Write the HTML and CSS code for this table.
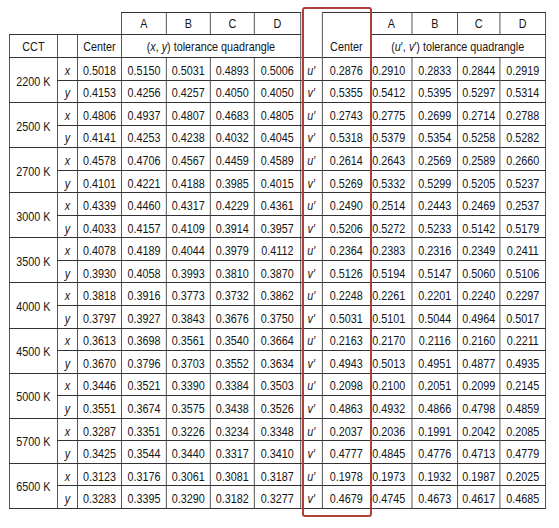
FILE: index.html
```html
<!DOCTYPE html>
<html>
<head>
<meta charset="utf-8">
<link rel="stylesheet" href="styles.css">
</head>
<body>
<div class="page">
<table class="grid">
<colgroup>
<col class="c-cct"><col class="c-lab"><col class="c-ctr"><col class="c-a"><col class="c-b"><col class="c-c"><col class="c-d">
<col class="c-ulab"><col class="c-uctr"><col class="c-ua"><col class="c-ub"><col class="c-uc"><col class="c-ud">
</colgroup>
<tr class="h1"><td class="blank" colspan="3"></td><th>A</th><th>B</th><th>C</th><th>D</th><td class="uhead" rowspan="2"></td><td class="chead" rowspan="2">Center</td><th>A</th><th>B</th><th>C</th><th>D</th></tr>
<tr class="h2"><th>CCT</th><th></th><th>Center</th><th colspan="4">(<i>x</i>, <i>y</i>) tolerance quadrangle</th><th colspan="4">(<i>u</i>′, <i>v</i>′) tolerance quadrangle</th></tr>

<tr class="d r1"><td class="cct" rowspan="2">2200 K</td><td class="lab">x</td><td>0.5018</td><td>0.5150</td><td>0.5031</td><td>0.4893</td><td>0.5006</td><td class="lab">u′</td><td>0.2876</td><td>0.2910</td><td>0.2833</td><td>0.2844</td><td>0.2919</td></tr>
<tr class="d r2"><td class="lab">y</td><td>0.4153</td><td>0.4256</td><td>0.4257</td><td>0.4050</td><td>0.4050</td><td class="lab">v′</td><td>0.5355</td><td>0.5412</td><td>0.5395</td><td>0.5297</td><td>0.5314</td></tr>

<tr class="d r1"><td class="cct" rowspan="2">2500 K</td><td class="lab">x</td><td>0.4806</td><td>0.4937</td><td>0.4807</td><td>0.4683</td><td>0.4805</td><td class="lab">u′</td><td>0.2743</td><td>0.2775</td><td>0.2699</td><td>0.2714</td><td>0.2788</td></tr>
<tr class="d r2"><td class="lab">y</td><td>0.4141</td><td>0.4253</td><td>0.4238</td><td>0.4032</td><td>0.4045</td><td class="lab">v′</td><td>0.5318</td><td>0.5379</td><td>0.5354</td><td>0.5258</td><td>0.5282</td></tr>

<tr class="d r1"><td class="cct" rowspan="2">2700 K</td><td class="lab">x</td><td>0.4578</td><td>0.4706</td><td>0.4567</td><td>0.4459</td><td>0.4589</td><td class="lab">u′</td><td>0.2614</td><td>0.2643</td><td>0.2569</td><td>0.2589</td><td>0.2660</td></tr>
<tr class="d r2"><td class="lab">y</td><td>0.4101</td><td>0.4221</td><td>0.4188</td><td>0.3985</td><td>0.4015</td><td class="lab">v′</td><td>0.5269</td><td>0.5332</td><td>0.5299</td><td>0.5205</td><td>0.5237</td></tr>

<tr class="d r1"><td class="cct" rowspan="2">3000 K</td><td class="lab">x</td><td>0.4339</td><td>0.4460</td><td>0.4317</td><td>0.4229</td><td>0.4361</td><td class="lab">u′</td><td>0.2490</td><td>0.2514</td><td>0.2443</td><td>0.2469</td><td>0.2537</td></tr>
<tr class="d r2"><td class="lab">y</td><td>0.4033</td><td>0.4157</td><td>0.4109</td><td>0.3914</td><td>0.3957</td><td class="lab">v′</td><td>0.5206</td><td>0.5272</td><td>0.5233</td><td>0.5142</td><td>0.5179</td></tr>

<tr class="d r1"><td class="cct" rowspan="2">3500 K</td><td class="lab">x</td><td>0.4078</td><td>0.4189</td><td>0.4044</td><td>0.3979</td><td>0.4112</td><td class="lab">u′</td><td>0.2364</td><td>0.2383</td><td>0.2316</td><td>0.2349</td><td>0.2411</td></tr>
<tr class="d r2"><td class="lab">y</td><td>0.3930</td><td>0.4058</td><td>0.3993</td><td>0.3810</td><td>0.3870</td><td class="lab">v′</td><td>0.5126</td><td>0.5194</td><td>0.5147</td><td>0.5060</td><td>0.5106</td></tr>

<tr class="d r1"><td class="cct" rowspan="2">4000 K</td><td class="lab">x</td><td>0.3818</td><td>0.3916</td><td>0.3773</td><td>0.3732</td><td>0.3862</td><td class="lab">u′</td><td>0.2248</td><td>0.2261</td><td>0.2201</td><td>0.2240</td><td>0.2297</td></tr>
<tr class="d r2"><td class="lab">y</td><td>0.3797</td><td>0.3927</td><td>0.3843</td><td>0.3676</td><td>0.3750</td><td class="lab">v′</td><td>0.5031</td><td>0.5101</td><td>0.5044</td><td>0.4964</td><td>0.5017</td></tr>

<tr class="d r1"><td class="cct" rowspan="2">4500 K</td><td class="lab">x</td><td>0.3613</td><td>0.3698</td><td>0.3561</td><td>0.3540</td><td>0.3664</td><td class="lab">u′</td><td>0.2163</td><td>0.2170</td><td>0.2116</td><td>0.2160</td><td>0.2211</td></tr>
<tr class="d r2"><td class="lab">y</td><td>0.3670</td><td>0.3796</td><td>0.3703</td><td>0.3552</td><td>0.3634</td><td class="lab">v′</td><td>0.4943</td><td>0.5013</td><td>0.4951</td><td>0.4877</td><td>0.4935</td></tr>

<tr class="d r1"><td class="cct" rowspan="2">5000 K</td><td class="lab">x</td><td>0.3446</td><td>0.3521</td><td>0.3390</td><td>0.3384</td><td>0.3503</td><td class="lab">u′</td><td>0.2098</td><td>0.2100</td><td>0.2051</td><td>0.2099</td><td>0.2145</td></tr>
<tr class="d r2"><td class="lab">y</td><td>0.3551</td><td>0.3674</td><td>0.3575</td><td>0.3438</td><td>0.3526</td><td class="lab">v′</td><td>0.4863</td><td>0.4932</td><td>0.4866</td><td>0.4798</td><td>0.4859</td></tr>

<tr class="d r1"><td class="cct" rowspan="2">5700 K</td><td class="lab">x</td><td>0.3287</td><td>0.3351</td><td>0.3226</td><td>0.3234</td><td>0.3348</td><td class="lab">u′</td><td>0.2037</td><td>0.2036</td><td>0.1991</td><td>0.2042</td><td>0.2085</td></tr>
<tr class="d r2"><td class="lab">y</td><td>0.3425</td><td>0.3544</td><td>0.3440</td><td>0.3317</td><td>0.3410</td><td class="lab">v′</td><td>0.4777</td><td>0.4845</td><td>0.4776</td><td>0.4713</td><td>0.4779</td></tr>

<tr class="d r1"><td class="cct" rowspan="2">6500 K</td><td class="lab">x</td><td>0.3123</td><td>0.3176</td><td>0.3061</td><td>0.3081</td><td>0.3187</td><td class="lab">u′</td><td>0.1978</td><td>0.1973</td><td>0.1932</td><td>0.1987</td><td>0.2025</td></tr>
<tr class="d r2"><td class="lab">y</td><td>0.3283</td><td>0.3395</td><td>0.3290</td><td>0.3182</td><td>0.3277</td><td class="lab">v′</td><td>0.4679</td><td>0.4745</td><td>0.4673</td><td>0.4617</td><td>0.4685</td></tr>
</table>
<div class="hl"></div>
</div>
</body>
</html>
```

FILE: styles.css
```css
html, body {
  margin: 0;
  background: #fff;
}
body {
  font-family: "Liberation Sans", Arial, sans-serif;
  color: #151515;
}
.page {
  position: relative;
  width: 559px;
  height: 528px;
  padding: 12px 0 0 9px;
  box-sizing: border-box;
  overflow: hidden;
}
.grid {
  border-collapse: collapse;
  table-layout: fixed;
  width: 645.8px;
  transform: scaleX(0.83);
  transform-origin: 0 0;
  font-size: 13px;
  line-height: 15px;
}
.c-cct { width: 57.8px; }
.c-lab { width: 24.1px; }
.c-ctr { width: 53px; }
.c-a { width: 54.2px; }
.c-b { width: 53px; }
.c-c { width: 53px; }
.c-d { width: 55.4px; }
.c-ulab { width: 26.5px; }
.c-uctr { width: 57.8px; }
.c-ua { width: 50.6px; }
.c-ub { width: 54.2px; }
.c-uc { width: 51.8px; }
.c-ud { width: 54.2px; }

.grid td, .grid th {
  border: 1px solid #333;
  padding: 0;
  text-align: center;
  vertical-align: middle;
  font-weight: normal;
  white-space: nowrap;
  overflow: hidden;
}
.grid .blank {
  border: none;
}
.grid .uhead {
  border-top: none;
  border-bottom: none;
}
.grid .chead {
  vertical-align: bottom;
  padding-bottom: 3px;
}
.h1 { height: 22px; }
.h2 { height: 23px; }
.d { height: 22.55px; }
.d td {
  padding-top: 3px;
}
.grid td.cct {
  padding-top: 2px;
}
.grid td.lab {
  font-style: italic;
}
.r1 td:nth-child(10),
.r2 td:nth-child(9) {
  padding-right: 6px;
}
.hl {
  position: absolute;
  left: 302px;
  top: 7px;
  width: 66px;
  height: 506px;
  border: 2px solid #ad4039;
  border-radius: 3px;
}
```
